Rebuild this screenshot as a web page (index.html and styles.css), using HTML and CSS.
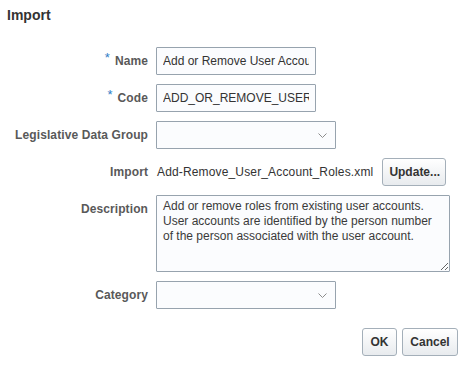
FILE: index.html
```html
<!DOCTYPE html>
<html lang="en">
<head>
    <meta charset="UTF-8">
    <title>Import</title>
    <link rel="stylesheet" href="styles.css">
</head>
<body>
<div class="dialog">
    <h2 class="title">Import</h2>
    <div class="form">
        <label class="label"><span class="req">*</span>Name</label>
        <div class="field"><input class="text-input" type="text" value="Add or Remove User Account Roles"></div>

        <label class="label"><span class="req">*</span>Code</label>
        <div class="field"><input class="text-input" type="text" value="ADD_OR_REMOVE_USER_ACCOUNT_ROLES"></div>

        <label class="label">Legislative Data Group</label>
        <div class="field">
            <div class="select">
                <svg width="9" height="5" viewBox="0 0 9 5"><polyline points="0.5,0.5 4.5,4.5 8.5,0.5" fill="none" stroke="#8c8c8c" stroke-width="1"/></svg>
            </div>
        </div>

        <label class="label">Import</label>
        <div class="field file-row">
            <span class="file-name">Add-Remove_User_Account_Roles.xml</span>
            <button class="btn btn-update">Update...</button>
        </div>

        <label class="label label-top">Description</label>
        <div class="field">
            <textarea class="desc">Add or remove roles from existing user accounts. User accounts are identified by the person number of the person associated with the user account.</textarea>
        </div>

        <label class="label">Category</label>
        <div class="field">
            <div class="select">
                <svg width="9" height="5" viewBox="0 0 9 5"><polyline points="0.5,0.5 4.5,4.5 8.5,0.5" fill="none" stroke="#8c8c8c" stroke-width="1"/></svg>
            </div>
        </div>
    </div>
    <div class="actions">
        <button class="btn btn-ok">OK</button>
        <button class="btn btn-cancel">Cancel</button>
    </div>
</div>
</body>
</html>
```

FILE: styles.css
```css
* {
    margin: 0;
    padding: 0;
    box-sizing: border-box;
}

body {
    background: #ffffff;
    color: #333333;
    font-family: "Liberation Sans", Arial, sans-serif;
    font-size: 12px;
}

.dialog {
    width: 470px;
    height: 366px;
}

.title {
    padding: 5px 7px 0;
    font-size: 14px;
    line-height: 20px;
    font-weight: bold;
    color: #333333;
}

.form {
    display: grid;
    grid-template-columns: 148px auto;
    column-gap: 8px;
    row-gap: 9px;
    margin-top: 22px;
}

.label {
    display: flex;
    align-items: center;
    justify-content: flex-end;
    height: 28px;
    font-weight: bold;
    color: #595959;
    letter-spacing: 0.1px;
}

.label-top {
    align-items: flex-start;
    padding-top: 7px;
}

.req {
    color: #2f7dc6;
    font-weight: normal;
    font-size: 13px;
    align-self: flex-start;
    margin-top: 3px;
    margin-right: 5px;
}

.field {
    display: flex;
    align-items: center;
    min-height: 28px;
}

.text-input {
    width: 160px;
    height: 28px;
    padding: 0 6px;
    border: 1px solid #97a3ae;
    border-radius: 1px;
    background: #fbfcfe;
    color: #333333;
    font-family: inherit;
    font-size: 12px;
    outline: none;
}

.select {
    display: flex;
    align-items: center;
    justify-content: flex-end;
    width: 180px;
    height: 28px;
    padding-right: 8px;
    border: 1px solid #97a3ae;
    border-radius: 1px;
    background: #fbfcfe;
}

.file-row {
    gap: 9px;
}

.file-name {
    margin-left: 1px;
    color: #333333;
    letter-spacing: 0.15px;
}

.desc {
    display: block;
    width: 294px;
    height: 77px;
    padding: 3px 10px 3px 6px;
    border: 1px solid #97a3ae;
    border-radius: 1px;
    background: #fbfcfe;
    color: #3a3a3a;
    font-family: inherit;
    font-size: 12px;
    line-height: 15px;
    resize: vertical;
    overflow: hidden;
    outline: none;
}

.btn {
    height: 28px;
    padding: 0 6px;
    border: 1px solid #a4afb9;
    border-radius: 3px;
    background: linear-gradient(#ffffff, #e8ebee);
    color: #333333;
    font-family: inherit;
    font-size: 12px;
    font-weight: bold;
}

.btn-update {
    width: 64px;
}

.actions {
    display: flex;
    justify-content: flex-end;
    gap: 5px;
    margin-top: 19px;
    padding-right: 12px;
}

.btn-ok {
    width: 35px;
}

.btn-cancel {
    width: 56px;
}
```
